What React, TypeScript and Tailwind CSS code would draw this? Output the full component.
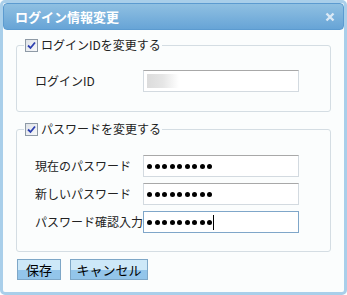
import React from "react";

const font = { fontFamily: '"Noto Sans CJK JP", "Liberation Sans", sans-serif' };

const Check: React.FC = () => (
  <span className="inline-flex h-[13px] w-[13px] items-center justify-center border border-[#8e9aa6] bg-gradient-to-br from-[#dfe3e8] to-[#f7f8fa]">
    <svg width="9" height="9" viewBox="0 0 9 9">
      <path d="M1 4.5 L3.5 7 L8 1.5" fill="none" stroke="#2c3fb0" strokeWidth="1.8" />
    </svg>
  </span>
);

const Dots: React.FC<{ n: number }> = ({ n }) => (
  <div className="flex items-center gap-[2.5px]">
    {Array.from({ length: n }).map((_, i) => (
      <span key={i} className="h-[5px] w-[5px] rounded-full bg-black" />
    ))}
  </div>
);

const Row: React.FC<{ label: string; focused?: boolean; blurred?: boolean }> = ({
  label,
  focused,
  blurred,
}) => (
  <div className="flex items-center">
    <div className="w-[108px] text-[12px] text-[#222]">{label}</div>
    <div
      className={
        "flex h-[22px] w-[156px] items-center bg-white px-[3px] " +
        (focused ? "border border-[#7fa6c9]" : "border border-[#d3dae0] border-t-[#a8a8a8]")
      }
    >
      {blurred ? (
        <div className="h-[14px] w-[32px] bg-gradient-to-r from-[#dcdcdc] via-[#e6e6e6] to-white" />
      ) : (
        <>
          <Dots n={9} />
          {focused && <span className="ml-[1px] h-[15px] w-px bg-black" />}
        </>
      )}
    </div>
  </div>
);

const Legend: React.FC<{ text: string }> = ({ text }) => (
  <legend className="ml-[7px] flex items-center gap-[3px] px-[1px] text-[12px] text-[#222]">
    <Check />
    {text}
  </legend>
);

const App: React.FC = () => {
  return (
    <div className="h-[295px] w-[347px] bg-white" style={font}>
      <div className="flex h-full flex-col rounded-[5px] border-[3px] border-[#a9cfea] bg-[#fbfdfd]">
        {/* Header */}
        <div className="flex h-[27px] items-center justify-between rounded-[4px] border border-[#5c9bd0] bg-gradient-to-b from-[#8fc0e2] to-[#67a4d6] pl-[11px] pr-[8px]">
          <span className="text-[13px] font-bold text-white">ログイン情報変更</span>
          <svg width="10" height="10" viewBox="0 0 10 10">
            <path d="M1.5 1.5 L8.5 8.5 M8.5 1.5 L1.5 8.5" stroke="#dbe9f5" strokeWidth="2.4" />
          </svg>
        </div>

        <div className="flex flex-col px-[13px] pt-[6px]">
          <fieldset className="h-[76px] rounded-[3px] border border-[#d4dde3] pb-[10px]">
            <Legend text="ログインIDを変更する" />
            <div className="mt-[16px] pl-[18px]">
              <Row label="ログインID" blurred />
            </div>
          </fieldset>

          <fieldset className="mt-[8px] h-[132px] rounded-[3px] border border-[#d4dde3]">
            <Legend text="パスワードを変更する" />
            <div className="mt-[17px] flex flex-col gap-[6px] pl-[18px]">
              <Row label="現在のパスワード" />
              <Row label="新しいパスワード" />
              <Row label="パスワード確認入力" focused />
            </div>
          </fieldset>

          <div className="mt-[7px] flex gap-[9px] px-[1px]">
            <button className="h-[21px] w-[44px] border border-[#7ea7c7] bg-gradient-to-b from-[#cde8f8] from-50% to-[#93c5ea] to-50% text-[13px] text-black">
              保存
            </button>
            <button className="h-[21px] w-[78px] border border-[#7ea7c7] bg-gradient-to-b from-[#cde8f8] from-50% to-[#93c5ea] to-50% text-[13px] text-black">
              キャンセル
            </button>
          </div>
        </div>
      </div>
    </div>
  );
};

export default App;
